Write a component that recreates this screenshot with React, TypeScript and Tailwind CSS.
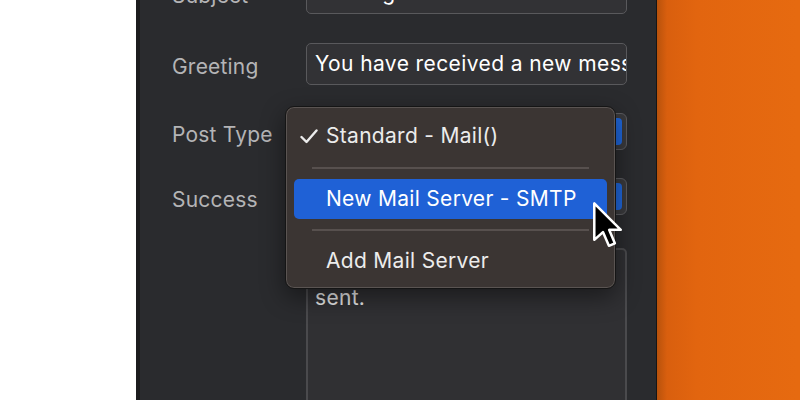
import React from 'react';

const font = { fontFamily: 'Inter, "Noto Sans", sans-serif' };

function Row({ label, children, labelOffset = 0 }: { label: string; children: React.ReactNode; labelOffset?: number }) {
  return (
    <div className="flex items-center">
      <div
        className="w-[134px] shrink-0 text-[21px] text-[#b4b4b6] tracking-[0.2px]"
        style={{ marginTop: labelOffset }}
      >
        {label}
      </div>
      <div className="w-[321px]">{children}</div>
    </div>
  );
}

function TextInput({ value }: { value: string }) {
  return (
    <div className="h-[42px] rounded-[5px] border border-[#59595c] bg-[#323235] px-[8px] flex items-center overflow-hidden whitespace-nowrap text-[21px] text-white tracking-[0.4px]">
      {value}
    </div>
  );
}

function PopupButton() {
  return (
    <div className="h-[37px] rounded-[6px] border border-[#5c5c60] bg-[#3a3a3d] flex justify-end p-[4px]">
      <div className="w-[22px] rounded-[4px] bg-[#1f66da]" />
    </div>
  );
}

function Cursor() {
  return (
    <svg
      className="absolute left-[452px] top-[201px]"
      width="32"
      height="48"
      viewBox="0 0 14 21"
    >
      <path
        d="M1 1 L1 17 L4.8 13.6 L7.4 19.6 L10 18.5 L7.5 12.6 L12.6 12.6 Z"
        fill="#000"
        stroke="#fff"
        strokeWidth="1.1"
        strokeLinejoin="round"
      />
    </svg>
  );
}

function Menu() {
  return (
    <div className="absolute left-[145px] top-[106px] w-[331px] h-[183px] rounded-[9px] border border-[#151515] bg-[#3b3533] shadow-[inset_0_0_0_1px_#5a5452,0_8px_24px_rgba(0,0,0,0.45)] px-[8px] pt-[8px] text-[21px] text-[#ececec] tracking-[0.3px]">
      <div className="h-[42px] flex items-center">
        <span className="w-[32px] pl-[6px] flex items-center">
          <svg width="18" height="15" viewBox="0 0 18 15">
            <path d="M1.5 8 L6.5 13 L16.5 1.5" fill="none" stroke="#ececec" strokeWidth="2.4" strokeLinecap="round" strokeLinejoin="round" />
          </svg>
        </span>
        <span>Standard - Mail()</span>
      </div>
      <div className="h-[22px] flex items-center px-[18px]">
        <div className="h-[2px] w-full bg-[#57504e]" />
      </div>
      <div className="h-[40px] rounded-[5px] bg-[#1f61d6] flex items-center pl-[32px] text-white">
        New Mail Server - SMTP
      </div>
      <div className="h-[22px] flex items-center px-[18px]">
        <div className="h-[2px] w-full bg-[#57504e]" />
      </div>
      <div className="h-[40px] flex items-center pl-[32px]">Add Mail Server</div>
    </div>
  );
}

export default function App() {
  return (
    <div className="w-[800px] h-[400px] flex overflow-hidden bg-white" style={font}>
      <div className="w-[136px] shrink-0 bg-white" />
      <div className="relative w-[521px] shrink-0 border-l-[4px] border-l-[#1c1c1e] border-r border-r-[#161616] bg-[#2a2b2e] overflow-hidden">
        <div className="flex flex-col pl-[32px] mt-[-28px]">
          <Row label="Subject" labelOffset={6}>
            <TextInput value="Message from the website" />
          </Row>
          <div className="h-[29px]" />
          <Row label="Greeting" labelOffset={6}>
            <TextInput value="You have received a new message" />
          </Row>
          <div className="h-[28px]" />
          <Row label="Post Type" labelOffset={6}>
            <PopupButton />
          </Row>
          <div className="h-[27px]" />
          <Row label="Success" labelOffset={6}>
            <PopupButton />
          </Row>
          <div className="h-[33px]" />
          <Row label="">
            <div className="h-[200px] rounded-[5px] border-2 border-[#4a4a4d] bg-[#303033] px-[7px] pt-[9px] text-[21px] leading-[26px] text-[#e6e6e6] tracking-[0.3px] whitespace-nowrap overflow-hidden">
              Your message has been
              <br />
              sent.
            </div>
          </Row>
        </div>
        <Menu />
        <Cursor />
      </div>
      <div className="flex-1 bg-[linear-gradient(to_right,#b8520c_0px,#d95f0e_10px,#e2650f_40px,#e66a10_140px)]" />
    </div>
  );
}
